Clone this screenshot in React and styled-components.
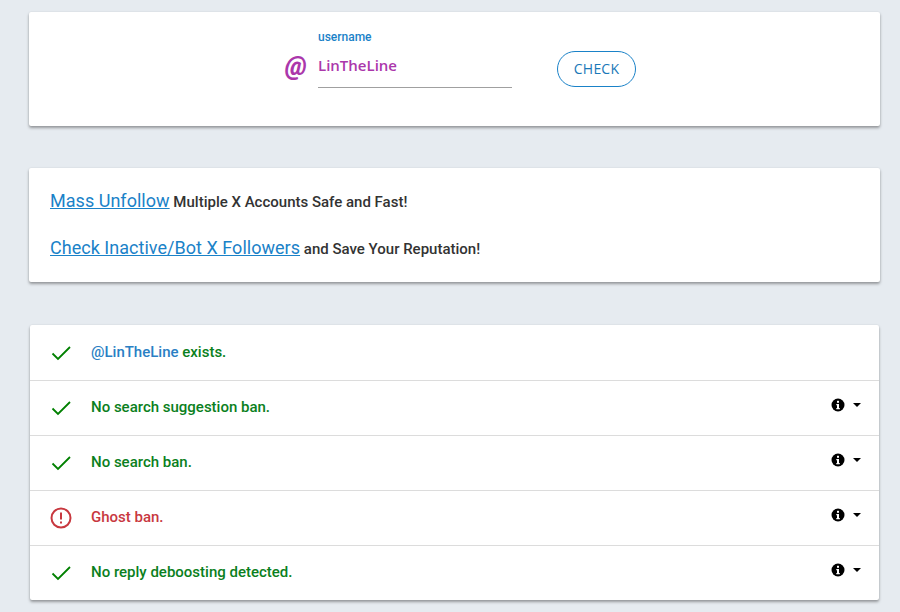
import React from 'react';
import styled, { createGlobalStyle } from 'styled-components';

const Global = createGlobalStyle`
  html, body { margin: 0; padding: 0; background: #e6ebf0; }
  body { font-family: Roboto, "Liberation Sans", sans-serif; }
`;
const Page = styled.div`
  width: 900px;
  height: 612px;
  overflow: hidden;
  box-sizing: border-box;
  padding: 12px 20px 0 29px;
  display: flex;
  flex-direction: column;
`;
const Card = styled.section`
  background: #fff;
  border-radius: 2px;
  box-shadow: 0 2px 3px rgba(0,0,0,.35), 0 0 2px rgba(0,0,0,.08);
`;
const SearchCard = styled(Card)`
  height: 114px;
  display: flex;
  justify-content: center;
  padding-left: 12px;
  box-sizing: border-box;
`;
const AtSign = styled.span`
  font: italic 900 25px/1 Roboto, sans-serif;
  color: #ab37ab;
  width: 33px;
  margin-top: 42px;
  height: 28px;
`;
const Field = styled.div`
  width: 194px;
  margin-top: 18px;
  display: flex;
  flex-direction: column;
`;
const Label = styled.label`
  font: 500 12px/14px Roboto, sans-serif;
  color: #1a82c8;
`;
const InputValue = styled.div`
  font: 600 15px/20px "Open Sans", sans-serif;
  color: #ab37ab;
  height: 44px;
  box-sizing: border-box;
  padding-top: 11px;
  border-bottom: 1px solid #a0a0a0;
`;
const CheckButton = styled.button`
  width: 79px;
  height: 36px;
  margin: 39px 0 0 45px;
  border: 1px solid #1a82c8;
  border-radius: 18px;
  background: #fff;
  color: #1a78b8;
  font: 400 14px/1 "Open Sans", sans-serif;
  letter-spacing: .2px;
  padding: 0;
`;
const PromoCard = styled(Card)`
  height: 114px;
  margin-top: 42px;
  box-sizing: border-box;
  padding: 22px 21px 0;
  display: flex;
  flex-direction: column;
  gap: 24px;
`;
const PromoLine = styled.p`
  margin: 0;
  font: 500 15px/22px Roboto, sans-serif;
  color: #333;
`;
const PromoLink = styled.a`
  font-size: 18px;
  font-weight: 400;
  letter-spacing: .03px;
  color: #1a82c8;
  text-decoration: underline;
`;
const ResultCard = styled(Card)`
  margin: 43px 1px 0;
  display: flex;
  flex-direction: column;
`;
const Row = styled.div`
  height: 55px;
  box-sizing: border-box;
  padding: 0 18px 0 21px;
  display: flex;
  align-items: center;
  border-top: ${p => (p.$first ? 'none' : '1px solid #dcdcdc')};
`;
const StatusIcon = styled.span`
  width: 40px;
  height: 22px;
  display: flex;
  align-items: center;
  flex: none;
`;
const Message = styled.span`
  font: 500 15px/20px Roboto, sans-serif;
  color: ${p => (p.$bad ? '#c8383f' : '#0a8020')};
  flex: 1;
  margin-top: -2px;
`;
const Handle = styled.span`
  color: #2a7fc4;
`;
const Details = styled.span`
  display: flex;
  align-items: center;
  gap: 8px;
  margin-top: -6px;
`;
const Caret = styled.span`
  width: 0;
  height: 0;
  border-left: 4px solid transparent;
  border-right: 4px solid transparent;
  border-top: 4px solid #000;
`;

const Check = () => (
  <svg width="20" height="16" viewBox="0 0 20 16" fill="none" stroke="#008000" strokeWidth="1.8">
    <path d="M1.5 8.5 L7 14 L19 2" />
  </svg>
);
const Alert = () => (
  <svg width="22" height="22" viewBox="0 0 22 22" fill="none" stroke="#c8383f" strokeWidth="2" style={{ marginLeft: -1 }}>
    <circle cx="11" cy="11" r="9.5" />
    <path d="M11 5.5 V12.5" />
    <path d="M11 14.5 V16.5" />
  </svg>
);
const Info = () => (
  <svg width="14" height="14" viewBox="0 0 14 14">
    <circle cx="7" cy="7" r="6.5" fill="#000" />
    <rect x="6" y="2.8" width="2" height="2" fill="#fff" />
    <path d="M5.3 6 H8 V10 H8.8 V11.2 H5.3 V10 H6 V7.2 H5.3 Z" fill="#fff" />
  </svg>
);

const rows = [
  { id: 'exists', text: <><Handle>@LinTheLine</Handle> exists.</>, plain: true },
  { id: 'suggestion', text: 'No search suggestion ban.' },
  { id: 'search', text: 'No search ban.' },
  { id: 'ghost', text: 'Ghost ban.', bad: true },
  { id: 'reply', text: 'No reply deboosting detected.' },
];

export default function App() {
  return (
    <Page>
      <Global />
      <SearchCard>
        <AtSign>@</AtSign>
        <Field>
          <Label>username</Label>
          <InputValue>LinTheLine</InputValue>
        </Field>
        <CheckButton>CHECK</CheckButton>
      </SearchCard>
      <PromoCard>
        <PromoLine><PromoLink href="#">Mass Unfollow</PromoLink> Multiple X Accounts Safe and Fast!</PromoLine>
        <PromoLine><PromoLink href="#">Check Inactive/Bot X Followers</PromoLink> and Save Your Reputation!</PromoLine>
      </PromoCard>
      <ResultCard>
        {rows.map((r, i) => (
          <Row key={r.id} $first={i === 0}>
            <StatusIcon>{r.bad ? <Alert /> : <Check />}</StatusIcon>
            <Message $bad={r.bad}>{r.text}</Message>
            {!r.plain && <Details><Info /><Caret /></Details>}
          </Row>
        ))}
      </ResultCard>
    </Page>
  );
}
